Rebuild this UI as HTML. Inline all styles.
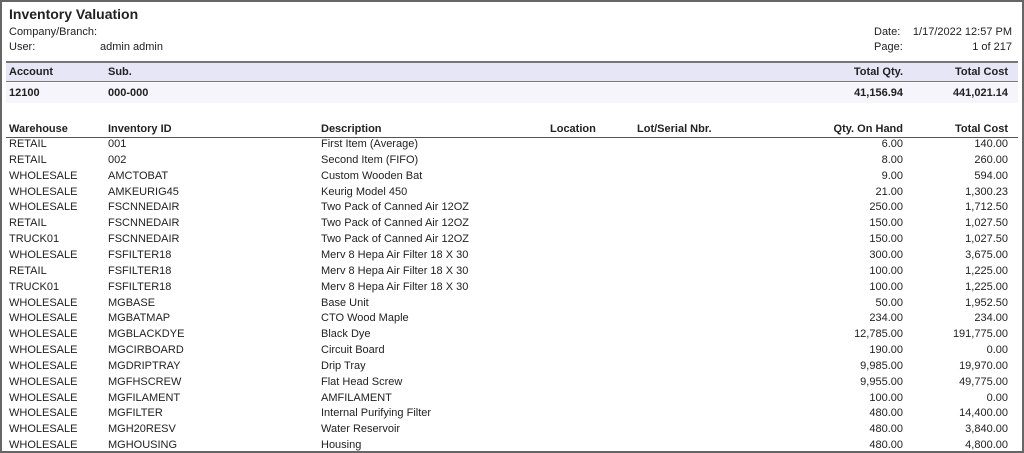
<!DOCTYPE html>
<html><head><meta charset="utf-8"><style>
*{margin:0;padding:0;box-sizing:border-box}
body{width:1024px;height:453px;background:#fff;font-family:"Liberation Sans",Arial,sans-serif;font-size:11px;color:#222;position:relative;overflow:hidden}
.frame{position:absolute;left:0;top:0;width:1024px;height:453px;border:2px solid #666;border-right-width:2px}
.a{position:absolute;white-space:nowrap;line-height:14px}
.r{text-align:right}
.b{font-weight:bold}
.band1{position:absolute;left:6px;top:61px;width:1012px;height:21px;background:#e6e6f6;border-top:2px solid #777;border-bottom:1px solid #777}
.band2{position:absolute;left:6px;top:83px;width:1012px;height:20px;background:#f5f5fb}
.hl{position:absolute;left:6px;top:137px;width:1012px;height:1px;background:#555}
</style></head><body>
<div class="frame"></div>
<div class="a b" style="left:9px;top:6px;font-size:14px;line-height:16px">Inventory Valuation</div>
<div class="a" style="left:9px;top:25px">Company/Branch:</div>
<div class="a" style="left:9px;top:40px">User:</div>
<div class="a" style="left:100px;top:40px">admin admin</div>
<div class="a" style="left:874px;top:25px">Date:</div>
<div class="a r" style="left:900px;width:112px;top:25px">1/17/2022 12:57 PM</div>
<div class="a" style="left:874px;top:40px">Page:</div>
<div class="a r" style="left:900px;width:112px;top:40px">1 of 217</div>
<div class="band1"></div><div class="band2"></div>
<div class="a b" style="left:9px;top:65px">Account</div>
<div class="a b" style="left:108px;top:65px">Sub.</div>
<div class="a b r" style="left:800px;width:103px;top:65px">Total Qty.</div>
<div class="a b r" style="left:900px;width:108px;top:65px">Total Cost</div>
<div class="a b" style="left:9px;top:86px">12100</div>
<div class="a b" style="left:108px;top:86px">000-000</div>
<div class="a b r" style="left:800px;width:103px;top:86px">41,156.94</div>
<div class="a b r" style="left:900px;width:108px;top:86px">441,021.14</div>
<div class="a b" style="left:9px;top:122px">Warehouse</div>
<div class="a b" style="left:108px;top:122px">Inventory ID</div>
<div class="a b" style="left:321px;top:122px">Description</div>
<div class="a b" style="left:550px;top:122px">Location</div>
<div class="a b" style="left:637px;top:122px">Lot/Serial Nbr.</div>
<div class="a b r" style="left:800px;width:103px;top:122px">Qty. On Hand</div>
<div class="a b r" style="left:900px;width:108px;top:122px">Total Cost</div>
<div class="hl"></div>
<div id="rows"></div>
<script>
var d=[["RETAIL","001","First Item (Average)","6.00","140.00"],
["RETAIL","002","Second Item (FIFO)","8.00","260.00"],
["WHOLESALE","AMCTOBAT","Custom Wooden Bat","9.00","594.00"],
["WHOLESALE","AMKEURIG45","Keurig Model 450","21.00","1,300.23"],
["WHOLESALE","FSCNNEDAIR","Two Pack of Canned Air 12OZ","250.00","1,712.50"],
["RETAIL","FSCNNEDAIR","Two Pack of Canned Air 12OZ","150.00","1,027.50"],
["TRUCK01","FSCNNEDAIR","Two Pack of Canned Air 12OZ","150.00","1,027.50"],
["WHOLESALE","FSFILTER18","Merv 8 Hepa Air Filter 18 X 30","300.00","3,675.00"],
["RETAIL","FSFILTER18","Merv 8 Hepa Air Filter 18 X 30","100.00","1,225.00"],
["TRUCK01","FSFILTER18","Merv 8 Hepa Air Filter 18 X 30","100.00","1,225.00"],
["WHOLESALE","MGBASE","Base Unit","50.00","1,952.50"],
["WHOLESALE","MGBATMAP","CTO Wood Maple","234.00","234.00"],
["WHOLESALE","MGBLACKDYE","Black Dye","12,785.00","191,775.00"],
["WHOLESALE","MGCIRBOARD","Circuit Board","190.00","0.00"],
["WHOLESALE","MGDRIPTRAY","Drip Tray","9,985.00","19,970.00"],
["WHOLESALE","MGFHSCREW","Flat Head Screw","9,955.00","49,775.00"],
["WHOLESALE","MGFILAMENT","AMFILAMENT","100.00","0.00"],
["WHOLESALE","MGFILTER","Internal Purifying Filter","480.00","14,400.00"],
["WHOLESALE","MGH20RESV","Water Reservoir","480.00","3,840.00"],
["WHOLESALE","MGHOUSING","Housing","480.00","4,800.00"]];
var h="";d.forEach(function(r,i){var t=137+i*15.85;
h+='<div class="a" style="left:9px;top:'+t+'px">'+r[0]+'</div><div class="a" style="left:108px;top:'+t+'px">'+r[1]+'</div><div class="a" style="left:321px;top:'+t+'px">'+r[2]+'</div><div class="a r" style="left:800px;width:103px;top:'+t+'px">'+r[3]+'</div><div class="a r" style="left:900px;width:108px;top:'+t+'px">'+r[4]+'</div>';});
document.getElementById("rows").innerHTML=h;
</script>
</body></html>
